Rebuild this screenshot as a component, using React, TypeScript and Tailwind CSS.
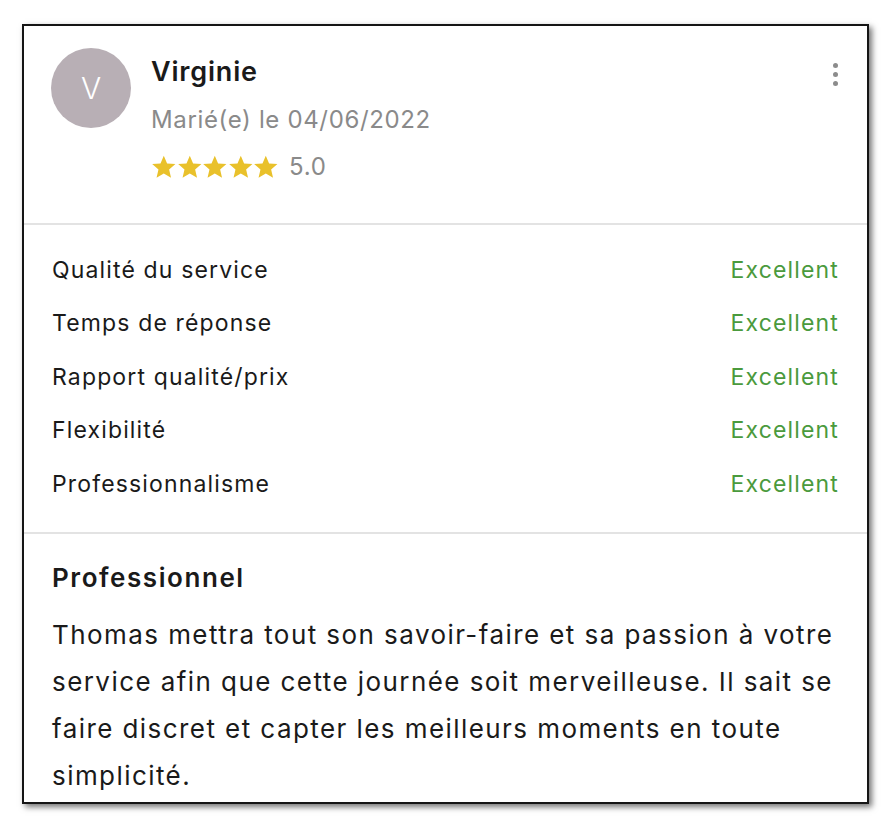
const criteria = [
  "Qualité du service",
  "Temps de réponse",
  "Rapport qualité/prix",
  "Flexibilité",
  "Professionnalisme",
];

function Star() {
  return (
    <svg viewBox="0 0 24 24" className="h-[26px] w-[25.6px]" fill="#e9c12b">
      <path d="M12 1.5l3.1 7.2 7.8.6-5.9 5.1 1.8 7.6L12 18l-6.8 4 1.8-7.6-5.9-5.1 7.8-.6z" />
    </svg>
  );
}

export default function App() {
  return (
    <div className="min-h-screen bg-white pt-[24px] pl-[22px]" style={{ fontFamily: "Inter, 'Noto Sans', sans-serif" }}>
      <div className="w-[847px] h-[780px] overflow-hidden border-2 border-[#151515] bg-white shadow-[3px_3px_6px_rgba(0,0,0,0.55)]">
        {/* header */}
        <div className="h-[197px] flex items-start gap-[20px] pt-[22px] pl-[27px] pr-[29px]">
          <div className="w-[80px] h-[80px] shrink-0 rounded-full bg-[#b8afb5] flex items-center justify-center text-white text-[30px] font-light">
            V
          </div>
          <div className="flex-1 text-[#1a1a1a]">
            <div className="h-[48px] leading-[48px] text-[27px] font-semibold tracking-[0.03em]">Virginie</div>
            <div className="h-[48px] leading-[48px] text-[24px] text-[#8a8a8a] tracking-[0.027em]">Marié(e) le 04/06/2022</div>
            <div className="h-[46px] flex items-center gap-[10px]">
              <div className="flex">
                <Star />
                <Star />
                <Star />
                <Star />
                <Star />
              </div>
              <span className="text-[24px] text-[#8a8a8a] tracking-[0.03em]">5.0</span>
            </div>
          </div>
          <div className="flex flex-col gap-[4px] pt-[15px]">
            <span className="w-[5px] h-[5px] rounded-full bg-[#8c8c8c]" />
            <span className="w-[5px] h-[5px] rounded-full bg-[#8c8c8c]" />
            <span className="w-[5px] h-[5px] rounded-full bg-[#8c8c8c]" />
          </div>
        </div>

        <div className="h-[2px] bg-[#e3e3e3]" />

        {/* ratings */}
        <div className="pt-[18px] pb-[21px] pl-[28px] pr-[28px]">
          {criteria.map((c) => (
            <div key={c} className="h-[53.5px] flex items-center justify-between text-[23px] tracking-[0.05em]">
              <span className="text-[#1a1a1a]">{c}</span>
              <span className="text-[#4a9a3d]">Excellent</span>
            </div>
          ))}
        </div>

        <div className="h-[2px] bg-[#e3e3e3]" />

        {/* comment */}
        <div className="pt-[22px] pl-[28px] pr-[20px] text-[#1a1a1a]">
          <h2 className="h-[44px] leading-[44px] text-[26px] font-semibold tracking-[0.06em]">Professionnel</h2>
          <p className="mt-[11px] text-[26px] leading-[47.3px] tracking-[0.055em]">
            Thomas mettra tout son savoir-faire et sa passion à votre service afin que cette journée soit
            merveilleuse. Il sait se faire discret et capter les meilleurs moments en toute simplicité.
          </p>
        </div>
      </div>
    </div>
  );
}
